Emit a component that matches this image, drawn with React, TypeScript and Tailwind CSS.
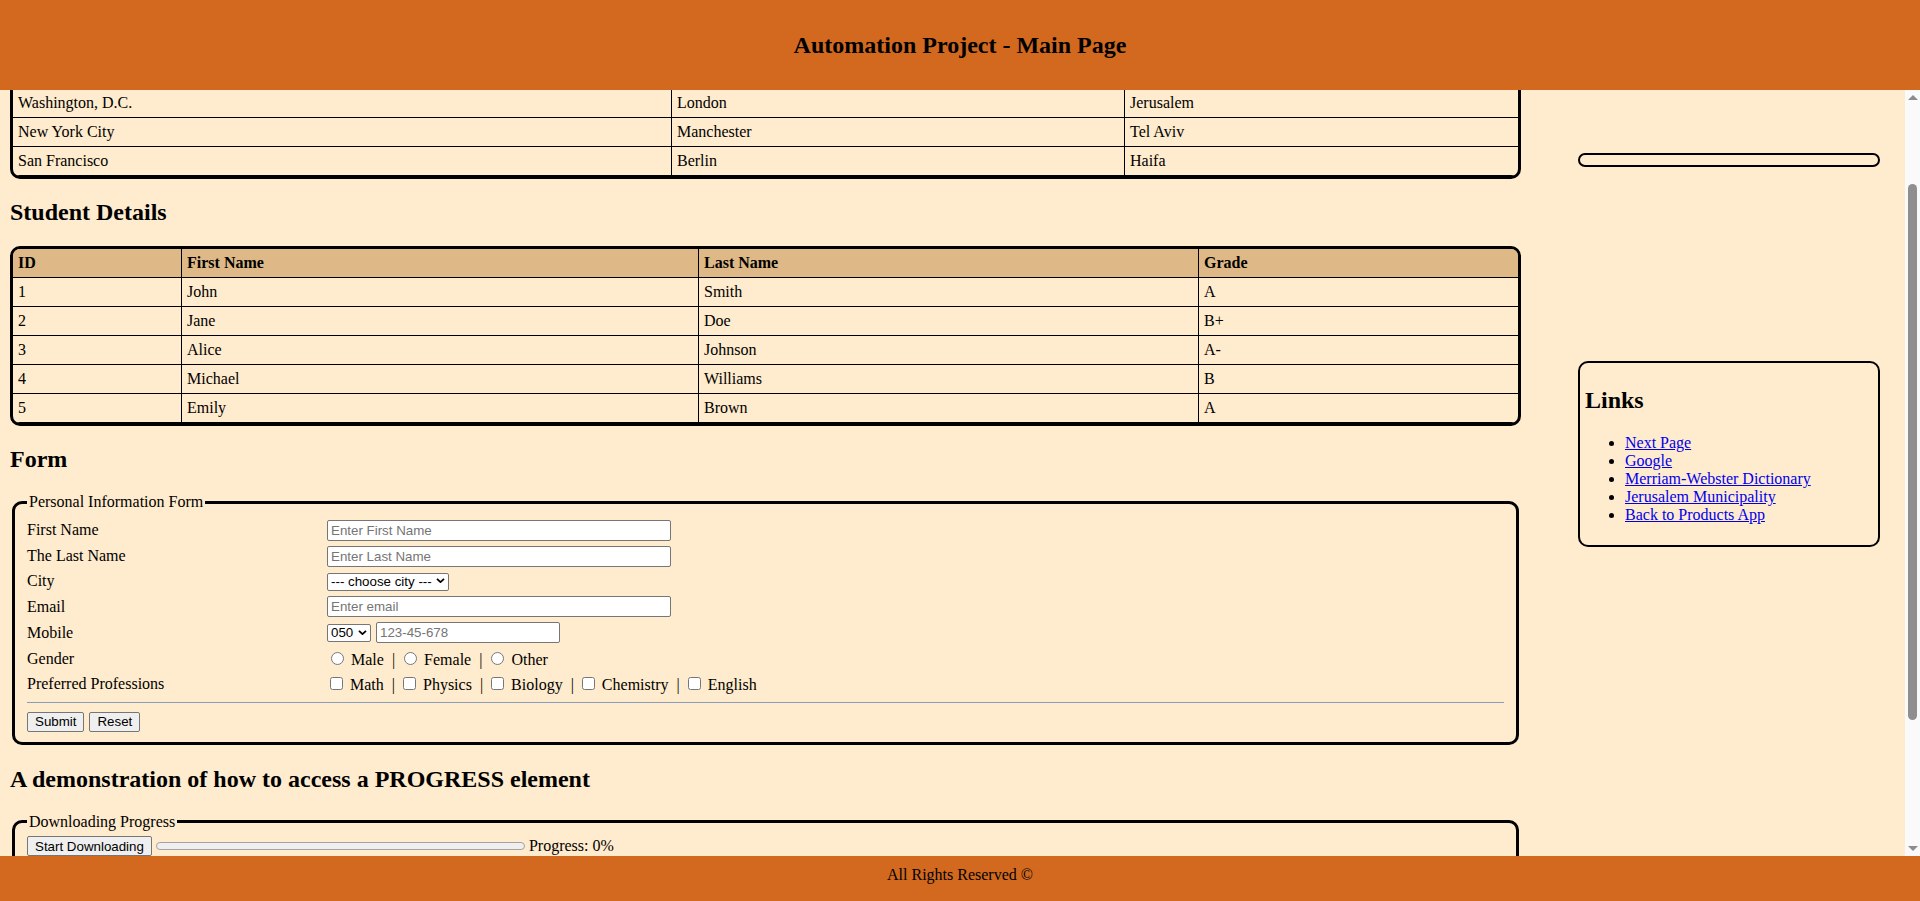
import { useLayoutEffect, useRef } from "react";

const cities = [
  ["Washington, D.C.", "London", "Jerusalem"],
  ["New York City", "Manchester", "Tel Aviv"],
  ["San Francisco", "Berlin", "Haifa"],
];

const students = [
  ["1", "John", "Smith", "A"],
  ["2", "Jane", "Doe", "B+"],
  ["3", "Alice", "Johnson", "A-"],
  ["4", "Michael", "Williams", "B"],
  ["5", "Emily", "Brown", "A"],
];

const links = [
  "Next Page",
  "Google",
  "Merriam-Webster Dictionary",
  "Jerusalem Municipality",
  "Back to Products App",
];

const sans = "font-['Liberation_Sans',Arial,sans-serif] text-[13.333px]";
const inputCls = `h-[21px] border border-[#767676] rounded-[2px] bg-white pl-[3px] leading-[15px] placeholder:text-[#757575] ${sans}`;
const selectCls = `h-[18px] w-full appearance-none border border-[#767676] rounded-[2px] bg-white pl-[3px] leading-[16px] text-black ${sans}`;
const btnCls = `h-[20px] px-[7px] border border-[#767676] rounded-[2px] bg-[#efefef] leading-[15px] text-black ${sans}`;

function DataTable({ head, rows, widths }: { head: string[]; rows: string[][]; widths: string[] }) {
  return (
    <div className="border-[3px] border-black rounded-[10px] overflow-hidden">
      <table className="w-full table-fixed border-separate border-spacing-0">
        <thead>
          <tr className="bg-[#deb887]">
            {head.map((h, i) => (
              <th
                key={i}
                className={`${widths[i] ?? ""} ${i > 0 ? "border-l" : ""} border-b border-black p-[5px] text-left font-bold`}
              >
                {h}
              </th>
            ))}
          </tr>
        </thead>
        <tbody>
          {rows.map((r, ri) => (
            <tr key={ri}>
              {r.map((c, i) => (
                <td key={i} className={`${i > 0 ? "border-l" : ""} border-b border-black p-[5px]`}>
                  {c}
                </td>
              ))}
            </tr>
          ))}
        </tbody>
      </table>
    </div>
  );
}

function Row({ label, h, children }: { label: string; h: string; children: React.ReactNode }) {
  return (
    <>
      <div className={`${h} flex items-center`}>{label}</div>
      <div className={`${h} flex items-center`}>{children}</div>
    </>
  );
}

function Select({ w, value, options }: { w: string; value: string; options: string[] }) {
  return (
    <div className={`relative ${w}`}>
      <select className={selectCls} defaultValue={value}>
        {options.map((o) => (
          <option key={o} value={o}>
            {o}
          </option>
        ))}
      </select>
      <svg
        className="pointer-events-none absolute right-[4px] top-[6.5px] w-[9px] h-[5px]"
        viewBox="0 0 9 5"
      >
        <path d="M1 0.9L4.5 4.1L8 0.9" stroke="black" strokeWidth="1.8" fill="none" />
      </svg>
    </div>
  );
}

const Sep = () => <span className="pl-[8px] pr-[4px]">|</span>;

export default function App() {
  const scroller = useRef<HTMLDivElement>(null);

  useLayoutEffect(() => {
    if (scroller.current) scroller.current.scrollTop = 112;
  }, []);

  return (
    <div className="h-screen flex flex-col bg-[#ffebcd] text-black text-[16px] leading-[18px] font-['Liberation_Serif','Times_New_Roman',serif]">
      <header className="h-[90px] shrink-0 bg-[#d2691e] flex items-center justify-center">
        <h1 className="text-[24px] leading-[27px] font-bold">Automation Project - Main Page</h1>
      </header>

      <div className="flex-1 min-h-0 flex">
        <div ref={scroller} className="flex-1 min-w-0 overflow-hidden">
          <div className="flex items-start pl-[10px]">
            <main className="w-[1511px] pt-[12px]">
              <div className="h-[27px] my-[20px]" />
              <DataTable head={["\u00a0", "\u00a0", "\u00a0"]} rows={cities} widths={["w-[658px]", "w-[453px]"]} />

              <h2 className="text-[24px] leading-[27px] font-bold my-[20px]">Student Details</h2>
              <DataTable
                head={["ID", "First Name", "Last Name", "Grade"]}
                rows={students}
                widths={["w-[168px]", "w-[517px]", "w-[500px]"]}
              />

              <h2 className="text-[24px] leading-[27px] font-bold my-[20px]">Form</h2>
              <fieldset className="mx-[2px] border-[3px] border-black rounded-[10px] px-[12px] pt-[5.6px] pb-[10px]">
                <legend className="px-[2px]">Personal Information Form</legend>
                <div className="grid grid-cols-[300px_1fr]">
                  <Row label="First Name" h="h-[27px]">
                    <input className={`${inputCls} w-[344px]`} placeholder="Enter First Name" />
                  </Row>
                  <Row label="The Last Name" h="h-[25px]">
                    <input className={`${inputCls} w-[344px]`} placeholder="Enter Last Name" />
                  </Row>
                  <Row label="City" h="h-[25px]">
                    <Select
                      w="w-[122px]"
                      value="--- choose city ---"
                      options={["--- choose city ---", "Jerusalem", "Tel Aviv", "Haifa"]}
                    />
                  </Row>
                  <Row label="Email" h="h-[26px]">
                    <input className={`${inputCls} w-[344px]`} placeholder="Enter email" />
                  </Row>
                  <Row label="Mobile" h="h-[26px]">
                    <div className="flex items-center gap-[5px]">
                      <Select w="w-[44px]" value="050" options={["050", "052", "054"]} />
                      <input className={`${inputCls} w-[184px]`} placeholder="123-45-678" />
                    </div>
                  </Row>
                  <Row label="Gender" h="h-[26px]">
                    <div>
                      <input type="radio" name="gender" className="mt-[3px] ml-[4px] mr-[3px]" /> Male
                      <Sep />
                      <input type="radio" name="gender" className="mt-[3px] ml-[5px] mr-[3px]" /> Female
                      <Sep />
                      <input type="radio" name="gender" className="mt-[3px] ml-[5px] mr-[3px]" /> Other
                    </div>
                  </Row>
                  <Row label="Preferred Professions" h="h-[25px]">
                    <div>
                      <input type="checkbox" className="my-[3px] ml-[3px] mr-[3px]" /> Math
                      <Sep />
                      <input type="checkbox" className="my-[3px] ml-[4px] mr-[3px]" /> Physics
                      <Sep />
                      <input type="checkbox" className="my-[3px] ml-[4px] mr-[3px]" /> Biology
                      <Sep />
                      <input type="checkbox" className="my-[3px] ml-[4px] mr-[3px]" /> Chemistry
                      <Sep />
                      <input type="checkbox" className="my-[3px] ml-[4px] mr-[3px]" /> English
                    </div>
                  </Row>
                </div>
                <hr className="mt-[5px] mb-[8px] border-t border-b border-t-[#9a9a9a] border-b-[#eeeeee]" />
                <div className="flex gap-[5px]">
                  <button className={btnCls}>Submit</button>
                  <button className={btnCls}>Reset</button>
                </div>
              </fieldset>

              <h2 className="text-[24px] leading-[27px] font-bold mt-[21px] mb-[20px]">
                A demonstration of how to access a PROGRESS element
              </h2>
              <fieldset className="mx-[2px] border-[3px] border-black rounded-[10px] px-[12px] pt-[5.6px] pb-[10px]">
                <legend className="px-[2px]">Downloading Progress</legend>
                <div className="flex items-center">
                  <button className={btnCls}>Start Downloading</button>
                  <div className="ml-[4px] w-[369px] h-[8px] rounded-full border border-[#a3a3a3] bg-[#efefef]" />
                  <span className="ml-[4px]">Progress: 0%</span>
                </div>
              </fieldset>
              <div className="h-[159px]" />
            </main>

            <aside className="ml-[57px] w-[302px] pt-[175px]">
              <div className="h-[14px] border-2 border-black rounded-[10px]" />
              <div className="mt-[194px] border-2 border-black rounded-[10px] p-[5px]">
                <h2 className="text-[24px] leading-[27px] font-bold mt-[19px] mb-[20px]">Links</h2>
                <ul className="list-disc pl-[40px] mb-[16px]">
                  {links.map((l) => (
                    <li key={l}>
                      <a href="#" className="text-[#0000ee] underline">
                        {l}
                      </a>
                    </li>
                  ))}
                </ul>
              </div>
            </aside>
          </div>
        </div>

        {/* scrollbar of the content pane */}
        <div className="w-[15px] shrink-0 bg-[#fafafa] flex flex-col items-center">
          <div className="h-[15px] flex items-center justify-center">
            <svg width="10" height="5" viewBox="0 0 10 5">
              <path d="M0 5L5 0L10 5Z" fill="#8c8c8c" />
            </svg>
          </div>
          <div className="mt-[79px] w-[9px] h-[536px] rounded-full bg-[#8f8f8f]" />
          <div className="flex-1" />
          <div className="h-[15px] flex items-center justify-center">
            <svg width="10" height="5" viewBox="0 0 10 5">
              <path d="M0 0L5 5L10 0Z" fill="#8c8c8c" />
            </svg>
          </div>
        </div>
      </div>

      <footer className="h-[45px] shrink-0 bg-[#d2691e] text-center pt-[10px]">All Rights Reserved ©</footer>
    </div>
  );
}
